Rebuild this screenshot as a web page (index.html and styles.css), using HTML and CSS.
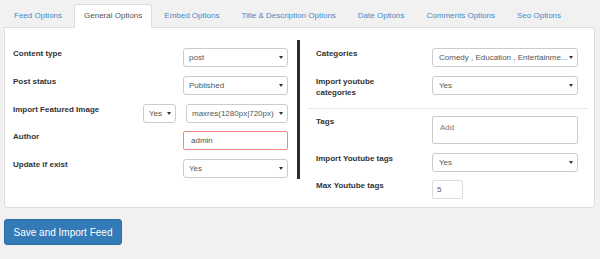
FILE: index.html
```html
<!DOCTYPE html>
<html lang="en">
  <head>
    <meta charset="UTF-8" />
    <meta name="viewport" content="width=device-width, initial-scale=1.0" />
    <title>Feed Options</title>
    <link rel="stylesheet" href="styles.css">
  </head>
  <body>
    <ul class="nav-tabs">
      <li><a href="#">Feed Options</a></li>
      <li class="active"><a href="#">General Options</a></li>
      <li><a href="#">Embed Options</a></li>
      <li><a href="#">Title &amp; Description Options</a></li>
      <li><a href="#">Date Options</a></li>
      <li><a href="#">Comments Options</a></li>
      <li><a href="#">Seo Options</a></li>
    </ul>

    <div class="tab-panel">
      <div class="col col-left">
        <div class="form-row">
          <label>Content type</label>
          <div class="select"><span>post</span><i class="caret"></i></div>
        </div>
        <div class="form-row">
          <label>Post status</label>
          <div class="select"><span>Published</span><i class="caret"></i></div>
        </div>
        <div class="form-row">
          <label>Import Featured Image</label>
          <div class="select select-xs"><span>Yes</span><i class="caret"></i></div>
          <div class="select select-md"><span>maxres(1280px|720px)</span><i class="caret"></i></div>
        </div>
        <div class="form-row">
          <label>Author</label>
          <div class="input input-error">admin</div>
        </div>
        <div class="form-row">
          <label>Update if exist</label>
          <div class="select"><span>Yes</span><i class="caret"></i></div>
        </div>
      </div>

      <div class="col col-right">
        <div class="form-row">
          <label>Categories</label>
          <div class="select"><span>Comedy , Education , Entertainme...</span><i class="caret"></i></div>
        </div>
        <div class="form-row">
          <label>Import youtube categories</label>
          <div class="select"><span>Yes</span><i class="caret"></i></div>
        </div>
        <hr />
        <div class="form-row">
          <label>Tags</label>
          <div class="tags-input"><span>Add</span></div>
        </div>
        <div class="form-row">
          <label>Import Youtube tags</label>
          <div class="select"><span>Yes</span><i class="caret"></i></div>
        </div>
        <div class="form-row">
          <label>Max Youtube tags</label>
          <div class="input input-xs">5</div>
        </div>
      </div>
    </div>

    <button type="button" class="btn-primary">Save and Import Feed</button>
  </body>
</html>
```

FILE: styles.css
```css
* {
  margin: 0;
  padding: 0;
  box-sizing: border-box;
}

body {
  font-family: "Liberation Sans", Arial, sans-serif;
  font-size: 8px;
  color: #333;
  background: #f1f1f1;
  padding: 4px 5px 0 4px;
}

/* Tabs */
.nav-tabs {
  list-style: none;
  display: flex;
  margin-bottom: -1px;
}

.nav-tabs li {
  margin-right: 2px;
  position: relative;
}

.nav-tabs a {
  display: block;
  padding: 0 9px;
  line-height: 22px;
  border: 1px solid transparent;
  border-radius: 3px 3px 0 0;
  color: #428bca;
  text-decoration: none;
}

.nav-tabs li.active a {
  background: white;
  color: #555;
  border-color: #ddd;
  border-bottom-color: white;
}

/* Panel */
.tab-panel {
  background: white;
  border: 1px solid #ddd;
  border-radius: 0 3px 3px 3px;
  padding-top: 12px;
  display: grid;
  grid-template-columns: 295px 1fr;
  align-items: start;
}

.col-left {
  border-right: 3px solid #2b2b2b;
  padding: 8px 9px 1px 8px;
  display: flex;
  flex-direction: column;
  gap: 8.75px;
}

.col-right {
  padding: 8px 16px 8px 16px;
}

.form-row {
  display: flex;
  align-items: flex-start;
}

.form-row label {
  flex: 1;
  font-weight: bold;
  line-height: 11px;
}

.col-right .form-row label {
  flex: 0 0 116px;
  padding-right: 26px;
}

.col-right .form-row {
  margin-bottom: 9px;
}

.col-right .form-row:nth-child(2),
.col-right .form-row:last-child {
  margin-bottom: 0;
}

.col-right .form-row:nth-child(5) {
  margin-bottom: 8px;
}

hr {
  border: none;
  border-top: 1px solid #e6e6e6;
  margin: 10px -10px 7px -8px;
}

/* Controls */
.select {
  width: 105px;
  height: 19px;
  border: 1px solid #ccc;
  border-radius: 3px;
  background: white;
  color: #555;
  display: flex;
  align-items: center;
  justify-content: space-between;
  padding: 0 4px 0 5px;
  white-space: nowrap;
  overflow: hidden;
}

.col-right .select {
  width: 146px;
  padding-left: 6px;
}

.select-xs {
  width: 33px;
  margin-right: 10px;
}

.select-md {
  width: 102px;
}

.caret {
  flex: none;
  width: 0;
  height: 0;
  border-top: 3px solid #333;
  border-left: 2px solid transparent;
  border-right: 2px solid transparent;
}

.input {
  width: 105px;
  height: 19px;
  line-height: 17px;
  border: 1px solid #ccc;
  border-radius: 2px;
  padding: 0 7px;
  color: #555;
}

.input-error {
  border: 1px solid #ef8585;
}

.input-xs {
  width: 31px;
  padding: 0 4px;
  border-color: #ddd;
}

.tags-input {
  width: 146px;
  height: 28px;
  border: 1px solid #ccc;
  border-radius: 2px;
  padding: 6px 7px;
  color: #777;
}

/* Button */
.btn-primary {
  margin-top: 11px;
  width: 118px;
  height: 26px;
  background: #337ab7;
  border: 1px solid #2e6da4;
  border-radius: 3px;
  color: white;
  font-family: inherit;
  font-size: 10px;
  cursor: pointer;
}
```
